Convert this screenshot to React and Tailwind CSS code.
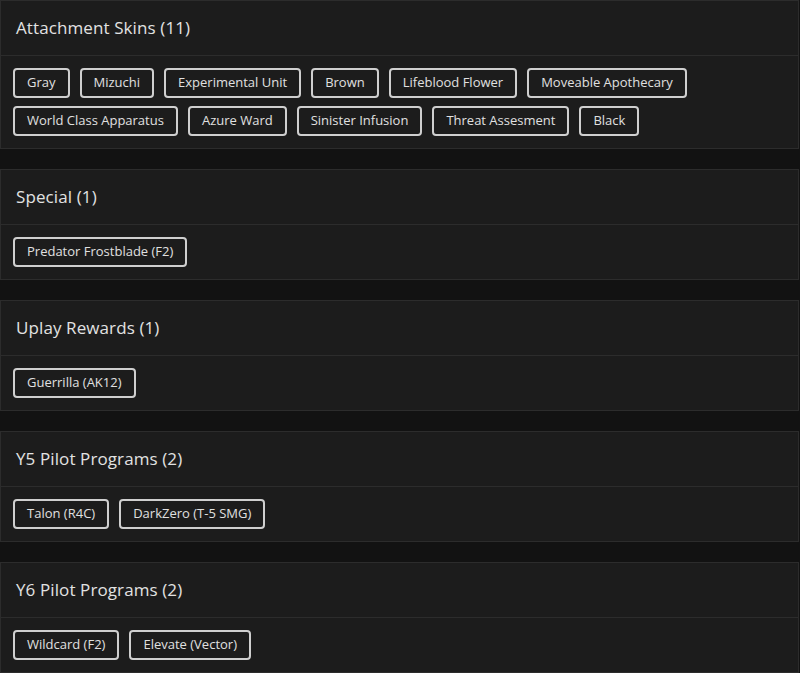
import React from 'react';

const sections = [
    {
        title: 'Attachment Skins',
        items: ['Gray', 'Mizuchi', 'Experimental Unit', 'Brown', 'Lifeblood Flower', 'Moveable Apothecary', 'World Class Apparatus', 'Azure Ward', 'Sinister Infusion', 'Threat Assesment', 'Black'],
    },
    { title: 'Special', items: ['Predator Frostblade (F2)'] },
    { title: 'Uplay Rewards', items: ['Guerrilla (AK12)'] },
    { title: 'Y5 Pilot Programs', items: ['Talon (R4C)', 'DarkZero (T-5 SMG)'] },
    { title: 'Y6 Pilot Programs', items: ['Wildcard (F2)', 'Elevate (Vector)'] },
];

const App = () => {
    return (
        <div className="min-h-screen bg-[#121212] pr-[1px] flex flex-col gap-[20px] text-[#e2e2e2]" style={{ fontFamily: '"Open Sans", "Noto Sans", sans-serif' }}>
            {sections.map((s) => (
                <div key={s.title} className="bg-[#1c1c1c] border border-[#2c2c2c]">
                    {/* Header */}
                    <div className="h-[55px] flex items-center px-[15px] border-b border-[#2c2c2c]">
                        <h2 className="text-[17px] font-medium tracking-[0.1px]">
                            {s.title} ({s.items.length})
                        </h2>
                    </div>
                    {/* Tags */}
                    <div className="flex flex-wrap gap-x-[10px] gap-y-[8px] px-[12px] pt-[12px] pb-[12px]">
                        {s.items.map((it) => (
                            <span
                                key={it}
                                className="h-[30px] flex items-center px-[12px] border-2 border-[#cfcfcf] rounded-[4px] text-[13px] text-[#e0e0e0]"
                            >
                                {it}
                            </span>
                        ))}
                    </div>
                </div>
            ))}
        </div>
    );
};

export default App;
